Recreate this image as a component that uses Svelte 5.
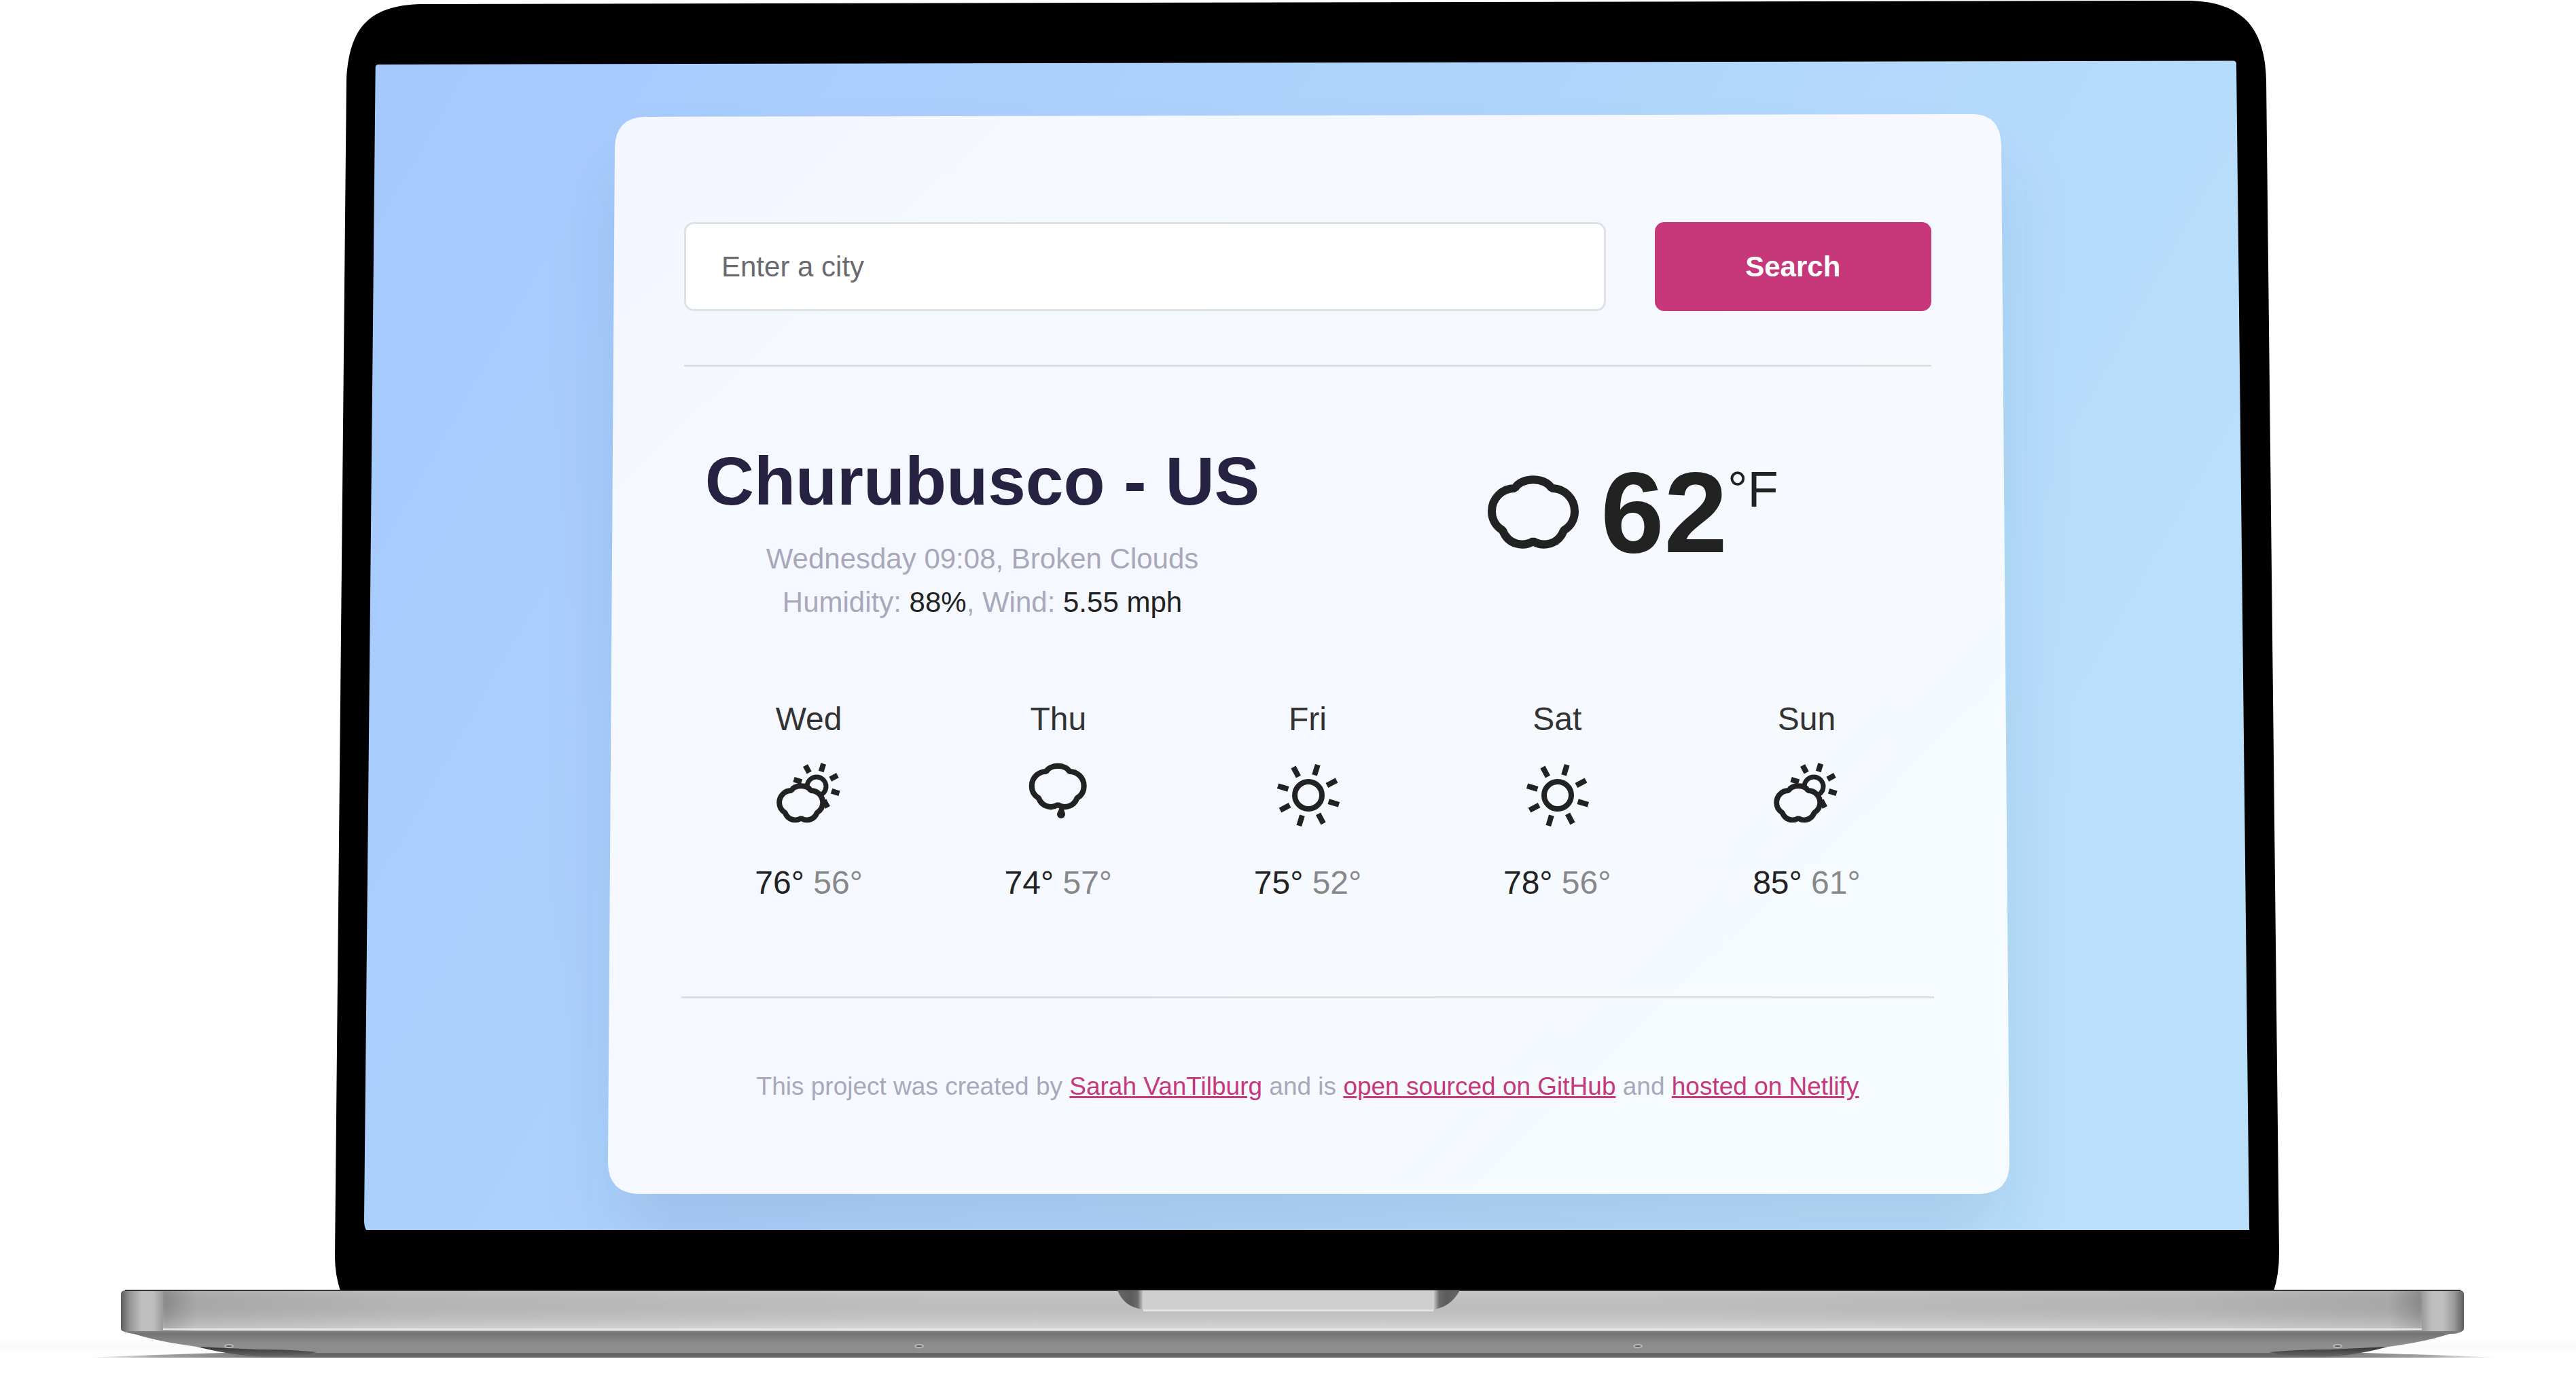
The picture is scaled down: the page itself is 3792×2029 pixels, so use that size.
<script>
  let city = $state('');

  const forecast = [
    { day: 'Wed', icon: 'partly', high: 76, low: 56 },
    { day: 'Thu', icon: 'rain', high: 74, low: 57 },
    { day: 'Fri', icon: 'sun', high: 75, low: 52 },
    { day: 'Sat', icon: 'sun', high: 78, low: 56 },
    { day: 'Sun', icon: 'partly', high: 85, low: 61 }
  ];

  const rays = [17, 62, 107, 152, 197, 242, 287, 332];
  const hazyRays = [17, 62, 107, 152, 287, 332];
  const screws = [337, 1353, 2411, 3441];

  const cloud =
    'M40 19C49 2 85 2 94 19C113 19 128 34 128 53C128 65 122 75 112 81C104 102 82 106 67 97C52 106 30 102 22 81C12 75 6 65 6 53C6 34 21 19 40 19Z';
</script>

<main class="laptop">
  <svg class="shell" viewBox="0 0 3792 2029" aria-hidden="true">
    <defs>
      <linearGradient id="sky" x1="0" y1="0" x2="1" y2="0.35">
        <stop offset="0" stop-color="#a6c9fe" />
        <stop offset="0.5" stop-color="#aed3fc" />
        <stop offset="1" stop-color="#b9dffb" />
      </linearGradient>
      <linearGradient id="metal" x1="0" x2="1" y1="0" y2="0">
        <stop offset="0" stop-color="#5e5e5e" />
        <stop offset="0.004" stop-color="#989898" />
        <stop offset="0.009" stop-color="#c0c0c0" />
        <stop offset="0.014" stop-color="#bdbdbd" />
        <stop offset="0.019" stop-color="#929292" />
        <stop offset="0.032" stop-color="#b2b2b2" />
        <stop offset="0.12" stop-color="#c0c0c0" />
        <stop offset="0.35" stop-color="#cbcbcb" />
        <stop offset="0.65" stop-color="#cbcbcb" />
        <stop offset="0.88" stop-color="#c0c0c0" />
        <stop offset="0.968" stop-color="#b2b2b2" />
        <stop offset="0.981" stop-color="#929292" />
        <stop offset="0.986" stop-color="#bdbdbd" />
        <stop offset="0.991" stop-color="#c0c0c0" />
        <stop offset="0.996" stop-color="#989898" />
        <stop offset="1" stop-color="#5e5e5e" />
      </linearGradient>
      <linearGradient id="sheen" x1="0" x2="0" y1="0" y2="1">
        <stop offset="0" stop-color="#000" stop-opacity="0.02" />
        <stop offset="1" stop-color="#fff" stop-opacity="0.3" />
      </linearGradient>
      <linearGradient id="under" x1="0" x2="0" y1="0" y2="1">
        <stop offset="0" stop-color="#808080" />
        <stop offset="0.14" stop-color="#7b7b7b" />
        <stop offset="0.16" stop-color="#737373" />
        <stop offset="0.6" stop-color="#8c8c8c" />
        <stop offset="1" stop-color="#8e8e8e" />
      </linearGradient>
      <linearGradient id="floor" x1="0" x2="1" y1="0" y2="0">
        <stop offset="0" stop-color="#666" stop-opacity="0" />
        <stop offset="0.03" stop-color="#666" stop-opacity="0.6" />
        <stop offset="0.09" stop-color="#666" />
        <stop offset="0.91" stop-color="#666" />
        <stop offset="0.97" stop-color="#666" stop-opacity="0.6" />
        <stop offset="1" stop-color="#666" stop-opacity="0" />
      </linearGradient>
      <linearGradient id="haze" x1="0" x2="0" y1="0" y2="1">
        <stop offset="0" stop-color="#000" stop-opacity="0" />
        <stop offset="0.5" stop-color="#000" stop-opacity="0.02" />
        <stop offset="1" stop-color="#000" stop-opacity="0" />
      </linearGradient>
      <linearGradient id="foot" x1="0" x2="0" y1="0" y2="1">
        <stop offset="0" stop-color="#333" />
        <stop offset="1" stop-color="#6a6a6a" />
      </linearGradient>
      <linearGradient id="notchLeft" x1="0" x2="1" y1="0" y2="0">
        <stop offset="0" stop-color="#666" />
        <stop offset="0.5" stop-color="#5c5c5c" />
        <stop offset="0.78" stop-color="#6a6a6a" />
        <stop offset="1" stop-color="#cecece" />
      </linearGradient>
      <linearGradient id="notchRight" x1="1" x2="0" y1="0" y2="0">
        <stop offset="0" stop-color="#666" />
        <stop offset="0.5" stop-color="#5c5c5c" />
        <stop offset="0.78" stop-color="#6a6a6a" />
        <stop offset="1" stop-color="#cecece" />
      </linearGradient>
    </defs>

    <path
      d="M620 6L3215 1C3300 0 3334 40 3336 118L3355 1845Q3355 1876 3347 1901H501Q493 1876 493 1850L510 118C514 44 540 8 620 6Z"
      fill="#000"
    />
    <path d="M557 95L3288 89.500Q3292 90 3292 94L3311 1811H539Q536 1806 536 1797L552.700 99Q553 95 557 95Z" fill="url(#sky)" />

    <rect x="0" y="1970" width="3792" height="24" fill="url(#haze)" />
    <path d="M125 1999Q220 1995 330 1992H3480Q3590 1995 3680 1999Z" fill="url(#floor)" />
    <path d="M178 1958H3627Q3622 1964 3606 1964Q3570 1976 3515 1983L3440 1992H370L290 1983Q235 1976 197 1964Q182 1962 178 1958Z" fill="url(#under)" />
    <path d="M290 1983Q350 1998 400 1998Q440 1997 466 1991Q430 1987 380 1987Z" fill="url(#foot)" />
    <path d="M3515 1983Q3460 1998 3410 1998Q3370 1997 3340 1991Q3380 1987 3430 1987Z" fill="url(#foot)" />
    {#each screws as x}
      <ellipse cx={x} cy="1982" rx="6" ry="2" fill="#555" stroke="#b8b8b8" stroke-width="2" />
    {/each}

    <path d="M184 1900H3621Q3627 1900 3627 1906V1956Q3627 1960 3622 1960H183Q178 1960 178 1956V1906Q178 1900 184 1900Z" fill="url(#metal)" />
    <rect x="240" y="1901" width="3325" height="58" fill="url(#sheen)" />
    <rect x="184" y="1899" width="3438" height="2" fill="#333" />
    <rect x="240" y="1956" width="3325" height="2" fill="#e6e6e6" />

    <path d="M1645 1900H1683V1928Q1655 1925 1645 1900Z" fill="url(#notchLeft)" />
    <path d="M2149 1900H2110V1928Q2135 1925 2149 1900Z" fill="url(#notchRight)" />
    <rect x="1682" y="1900" width="429" height="29" fill="#cfcfcf" />
    <rect x="1683" y="1928" width="427" height="3" fill="#e2e2e2" />
  </svg>

  <section class="card">
    <svg class="surface" viewBox="0 0 2064 1590" preserveAspectRatio="none" aria-hidden="true">
      <defs>
        <linearGradient id="paper" x1="0" y1="0" x2="1" y2="0.8">
          <stop offset="0" stop-color="#f4f7ff" />
          <stop offset="0.5" stop-color="#f5f9ff" />
          <stop offset="1" stop-color="#f6fbff" />
        </linearGradient>
        <filter id="soft" x="-10%" y="-10%" width="120%" height="125%">
          <feGaussianBlur stdDeviation="48" />
        </filter>
        <clipPath id="glass">
          <path d="M-342 -74L2397 -78L2416 1643H-359Z" />
        </clipPath>
      </defs>
      <g clip-path="url(#glass)">
        <rect x="10" y="75" width="2044" height="1580" rx="50" fill="#325078" fill-opacity="0.13" filter="url(#soft)" />
      </g>
      <path
        d="M54 4L2010 0Q2050 1 2051 46L2063 1545Q2063 1588 2020 1590H44Q1 1588 0 1545L10 48Q12 5 54 4Z"
        fill="url(#paper)"
      />
    </svg>

    <form class="search" onsubmit={(e) => e.preventDefault()}>
      <input type="text" placeholder="Enter a city" aria-label="City" bind:value={city} />
      <button type="submit">Search</button>
    </form>

    <hr />

    <div class="current">
      <div class="place">
        <h1>Churubusco - US</h1>
        <p>
          Wednesday 09:08, Broken Clouds<br />
          Humidity: <strong>88%</strong>, Wind: <strong>5.55 mph</strong>
        </p>
      </div>
      <div class="reading">
        <svg class="now" viewBox="0 0 134 108" role="img" aria-label="Broken clouds">
          <path d={cloud} class="line" stroke-width="12" />
        </svg>
        <span class="degrees">62</span>
        <span class="unit">°F</span>
      </div>
    </div>

    <ul class="forecast">
      {#each forecast as f}
        <li>
          <span class="day">{f.day}</span>
          <svg class="icon" viewBox="0 0 96 96" aria-hidden="true">
            {#if f.icon === 'sun'}
              <circle cx="49" cy="48" r="20" class="line" stroke-width="8" />
              {#each rays as a}
                <path d="M49 17V1" class="ray" transform="rotate({a} 49 48)" />
              {/each}
            {:else if f.icon === 'partly'}
              <circle cx="59" cy="35" r="14" class="line" stroke-width="7" />
              {#each hazyRays as a}
                <path d="M59 12V0" class="ray" transform="rotate({a} 59 35)" />
              {/each}
              <path d={cloud} class="line filled" stroke-width="15" transform="translate(1 31) scale(0.525)" />
            {:else}
              <path d={cloud} class="line" stroke-width="13" transform="translate(5 1) scale(0.63)" />
              <path d="M50 62C50 70 46 72 46 76A6 6 0 0 0 58 76C58 72 55 70 55 62Z" fill="#222" />
            {/if}
          </svg>
          <span class="temps">{f.high}° <span class="low">{f.low}°</span></span>
        </li>
      {/each}
    </ul>

    <hr class="wide" />

    <footer>
      This project was created by <a href="#author">Sarah VanTilburg</a> and is
      <a href="#source">open sourced on GitHub</a> and <a href="#host">hosted on Netlify</a>
    </footer>
  </section>
</main>

<style>
  :global(body) {
    background: #fff;
  }

  .laptop {
    display: grid;
    grid-template-columns: 895fr 2064fr 833fr;
    align-items: start;
    font-family: 'Liberation Sans', Arial, sans-serif;
    color: #222;
  }

  .shell {
    grid-area: 1 / 1 / 2 / -1;
    display: block;
    width: 100%;
  }

  .card {
    grid-area: 1 / 2;
    position: relative;
    isolation: isolate;
    box-sizing: border-box;
    margin-top: 168px;
    padding: 159px 116px 136px 112px;
  }

  .surface {
    position: absolute;
    inset: 0;
    z-index: -1;
    width: 100%;
    height: 100%;
    overflow: visible;
  }

  .search {
    display: grid;
    grid-template-columns: 1355fr 407fr;
    gap: 72px;
    height: 131px;
  }

  input,
  button {
    box-sizing: border-box;
    min-width: 0;
    margin: 0;
    border-radius: 14px;
    font-family: inherit;
    font-size: 42px;
  }

  input {
    padding: 0 52px;
    border: 3px solid #dee2e6;
    background: #fff;
    color: #222;
  }

  input::placeholder {
    color: #6a6a70;
    opacity: 1;
  }

  button {
    border: 0;
    background: #c6387a;
    color: #fff;
    font-weight: bold;
  }

  hr {
    height: 3px;
    margin: 79px 0 108px;
    border: 0;
    background: #dedfe0;
  }

  .wide {
    margin-inline: -4px;
  }

  .current {
    display: grid;
    grid-template-columns: 1fr 1fr;
    gap: 80px;
    text-align: center;
  }

  h1 {
    margin: 0 0 23px;
    font-size: 100px;
    line-height: 120px;
    color: #272142;
    white-space: nowrap;
  }

  p {
    margin: 0;
    font-size: 42px;
    line-height: 64px;
    color: #a9a8bb;
  }

  strong {
    font-weight: normal;
    color: #222;
  }

  .reading {
    display: flex;
    justify-content: center;
    align-items: flex-start;
    padding-top: 23px;
  }

  .now {
    width: 134px;
    height: 108px;
    margin: 29px 32px 0 0;
  }

  .degrees {
    font-size: 168px;
    font-weight: bold;
    line-height: 168px;
  }

  .unit {
    margin-top: 13px;
    font-size: 74px;
    line-height: 74px;
  }

  .line {
    fill: none;
    stroke: #222;
    stroke-linejoin: bevel;
  }

  .filled {
    fill: #f6faff;
  }

  .ray {
    stroke: #222;
    stroke-width: 8px;
  }

  .forecast {
    display: grid;
    grid-template-columns: repeat(5, 1fr);
    margin: 112px 0 139px;
    padding: 0;
    list-style: none;
    font-size: 48px;
    line-height: 56px;
  }

  li {
    display: flex;
    flex-direction: column;
    align-items: center;
  }

  .day {
    color: #333;
  }

  .icon {
    width: 96px;
    height: 96px;
    margin: 36px 0 53px;
  }

  .low {
    color: #888;
  }

  footer {
    font-size: 37px;
    line-height: 44px;
    text-align: center;
    color: #a9a8bb;
  }

  a {
    color: #c6387a;
  }
</style>
